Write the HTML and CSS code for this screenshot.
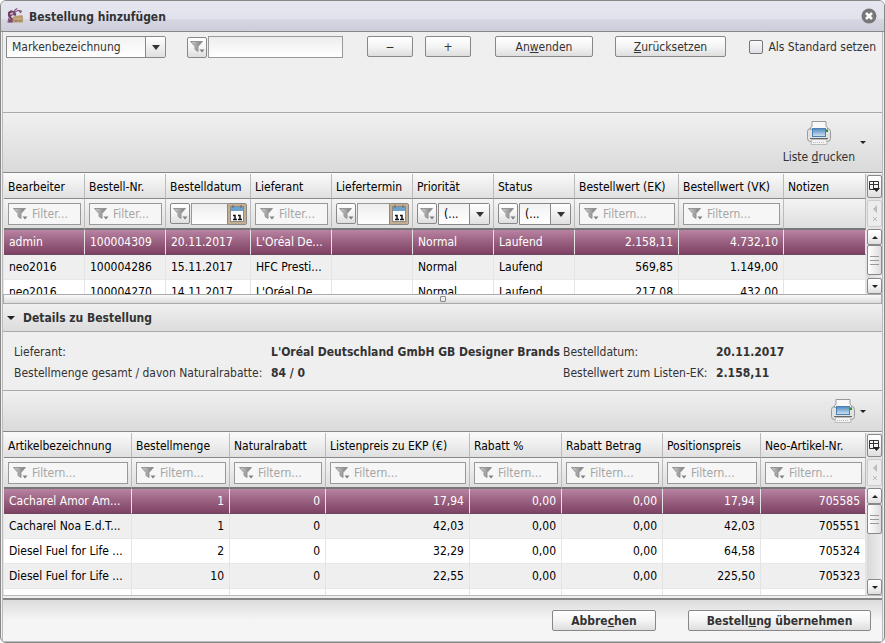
FILE: index.html
```html
<!DOCTYPE html>
<html lang="de">
<head>
    <meta charset="UTF-8">
    <meta name="viewport" content="width=device-width, initial-scale=1.0">
    <title>Bestellung hinzufügen</title>
    <link rel="stylesheet" href="styles.css">
    <script src="script.js" defer></script>
</head>
<body>
    <svg class="symbols" aria-hidden="true">
        <defs>
            <linearGradient id="funnelFill" x1="0" x2="1" y1="0" y2="0">
                <stop offset="0" stop-color="#d2d2d2"/>
                <stop offset="1" stop-color="#777"/>
            </linearGradient>
            <linearGradient id="paperFill" x1="0" x2="0" y1="0" y2="1">
                <stop offset="0" stop-color="#4d87bd"/>
                <stop offset="1" stop-color="#d3e4f3"/>
            </linearGradient>
        </defs>
        <symbol id="funnel" viewBox="0 0 15 14">
            <path d="M0.5 1.5h12l-4.500 5v5l-3-2v-3z" fill="url(#funnelFill)" stroke="#959595"/>
            <path d="M9.500 9.500h5l-2.500 3z" fill="#808080"/>
        </symbol>
        <symbol id="calendar" viewBox="0 0 18 20">
            <rect x="0" y="0" width="18" height="20" fill="#c4ae8e"/>
            <rect x="2.500" y="2.500" width="13" height="15" fill="#fff" stroke="#8a8a8a"/>
            <path d="M3 3h12v4H3z" fill="#6ba3cf"/>
            <path d="M5 1v3M13 1v3" stroke="#666"/>
            <path d="M5 11.500h2V15M5 15.500h4M10 11.500h2V15M10 15.500h4" fill="none" stroke="#111" stroke-width="1.500"/>
        </symbol>
        <symbol id="printer" viewBox="0 0 24 24">
            <rect x="0.500" y="7.500" width="23" height="13" rx="3" fill="#e2e2e2" stroke="#999"/>
            <path d="M3.500 8.500v-2l1.500-1v-5h14v5l1.500 1v2z" fill="#f8f8f8" stroke="#999"/>
            <rect x="5.500" y="7.500" width="13" height="8" fill="url(#paperFill)" stroke="#4a82b6"/>
            <path d="M3 17.500h18" stroke="#666"/>
            <path d="M4.500 18.500h15l0.500 5h-16z" fill="#f2f2f2" stroke="#bbb"/>
            <path d="M6 21.500h12" stroke="#bbb" stroke-dasharray="1 1"/>
            <rect x="19" y="9" width="2" height="2" fill="#1c9a2c"/>
        </symbol>
        <symbol id="columns" viewBox="0 0 11 12">
            <path d="M0.500 0.500h9v8h-9zM0.500 3.500h9M4.500 0.500v8" fill="none" stroke="#333"/>
            <path d="M4 7h7l-3.500 4z" fill="#222"/>
        </symbol>
    </svg>

    <div class="window">
        <header class="titlebar">
            <svg class="app-icon" viewBox="0 0 18 18" aria-hidden="true">
                <path d="M1 5l3-2 4 1 2 3-1 2-3-1-2 2 3 2-1 4H1l2-4-2-3z" fill="#6f4268"/>
                <path d="M7 5l2-3 2-1M8 5l4-2 4 1M12 3l3 3M2 11l-1 5M4 12v4" fill="none" stroke="#84557c" stroke-width="1.200"/>
                <path d="M3 6l3-1 1 2-3 1z" fill="#c5adc3"/>
                <path d="M6 10l3-1 7-1 1 2v6H6z" fill="#b79a70"/>
                <path d="M7 12h9" stroke="#d0b78f"/>
                <path d="M8 14h3M13 14h2" stroke="#8d724f"/>
            </svg>
            <h1>Bestellung hinzufügen</h1>
            <button class="close" aria-label="Schließen">
                <svg viewBox="0 0 16 16"><circle cx="8" cy="8" r="7.500" fill="#777"/><path d="M5 5l6 6M11 5l-6 6" stroke="#fff" stroke-width="2.500"/></svg>
            </button>
        </header>

        <main class="content">
            <form class="search">
                <span class="combo search-field">
                    <select aria-label="Suchfeld"><option>Markenbezeichnung</option></select>
                </span>
                <span class="filter-group search-value">
                    <button type="button" class="btn icon-btn" aria-label="Filterart"><svg><use href="#funnel"/></svg></button>
                    <input type="text" class="text" aria-label="Suchwert">
                </span>
                <button type="button" class="btn small wide-gap">−</button>
                <button type="button" class="btn small">+</button>
                <button type="button" class="btn apply wide-gap">An<u>w</u>enden</button>
                <button type="button" class="btn reset">Zurücksetzen</button>
                <label class="default"><input type="checkbox"> Als Standard setzen</label>
            </form>

            <div class="toolbar">
                <button class="print"><svg><use href="#printer"/></svg><span>Liste <u>d</u>rucken</span></button>
                <button class="menu" aria-label="Druckoptionen"></button>
            </div>

            <section class="grid orders">
                <div class="grid-view">
                    <table>
                        <colgroup>
                            <col class="c-81"><col class="c-81"><col class="c-85"><col class="c-81"><col class="c-81"><col class="c-81"><col class="c-81"><col class="c-104"><col class="c-105"><col>
                        </colgroup>
                        <thead>
                            <tr>
                                <th>Bearbeiter</th><th>Bestell-Nr.</th><th>Bestelldatum</th><th>Lieferant</th><th>Liefertermin</th>
                                <th>Priorität</th><th>Status</th><th>Bestellwert (EK)</th><th>Bestellwert (VK)</th><th>Notizen</th>
                            </tr>
                            <tr class="filters">
                                <td><label class="filter"><svg><use href="#funnel"/></svg><input type="text" placeholder="Filter..." aria-label="Bearbeiter filtern"></label></td>
                                <td><label class="filter"><svg><use href="#funnel"/></svg><input type="text" placeholder="Filter..." aria-label="Bestell-Nr. filtern"></label></td>
                                <td>
                                    <span class="filter-group">
                                        <button class="btn icon-btn" aria-label="Filterart"><svg><use href="#funnel"/></svg></button>
                                        <input type="text" class="text" aria-label="Bestelldatum filtern">
                                        <button class="btn date-btn" aria-label="Kalender"><svg><use href="#calendar"/></svg></button>
                                    </span>
                                </td>
                                <td><label class="filter"><svg><use href="#funnel"/></svg><input type="text" placeholder="Filter..." aria-label="Lieferant filtern"></label></td>
                                <td>
                                    <span class="filter-group">
                                        <button class="btn icon-btn" aria-label="Filterart"><svg><use href="#funnel"/></svg></button>
                                        <input type="text" class="text" aria-label="Liefertermin filtern">
                                        <button class="btn date-btn" aria-label="Kalender"><svg><use href="#calendar"/></svg></button>
                                    </span>
                                </td>
                                <td>
                                    <span class="filter-group">
                                        <button class="btn icon-btn" aria-label="Filterart"><svg><use href="#funnel"/></svg></button>
                                        <span class="combo"><select aria-label="Priorität filtern"><option>(...</option></select></span>
                                    </span>
                                </td>
                                <td>
                                    <span class="filter-group">
                                        <button class="btn icon-btn" aria-label="Filterart"><svg><use href="#funnel"/></svg></button>
                                        <span class="combo"><select aria-label="Status filtern"><option>(...</option></select></span>
                                    </span>
                                </td>
                                <td><label class="filter"><svg><use href="#funnel"/></svg><input type="text" placeholder="Filtern..." aria-label="Bestellwert (EK) filtern"></label></td>
                                <td><label class="filter"><svg><use href="#funnel"/></svg><input type="text" placeholder="Filtern..." aria-label="Bestellwert (VK) filtern"></label></td>
                                <td></td>
                            </tr>
                        </thead>
                        <tbody>
                            <tr class="selected"><td>admin</td><td>100004309</td><td>20.11.2017</td><td>L'Oréal De...</td><td></td><td>Normal</td><td>Laufend</td><td class="num">2.158,11</td><td class="num">4.732,10</td><td></td></tr>
                            <tr><td>neo2016</td><td>100004286</td><td>15.11.2017</td><td>HFC Presti...</td><td></td><td>Normal</td><td>Laufend</td><td class="num">569,85</td><td class="num">1.149,00</td><td></td></tr>
                            <tr><td>neo2016</td><td>100004270</td><td>14.11.2017</td><td>L'Oréal De...</td><td></td><td>Normal</td><td>Laufend</td><td class="num">217,08</td><td class="num">432,00</td><td></td></tr>
                        </tbody>
                    </table>
                </div>
                <div class="grid-side">
                    <button class="btn columns" aria-label="Spalten"><svg><use href="#columns"/></svg></button>
                    <button class="btn clear" aria-label="Filter löschen" disabled><i class="arrow left"></i><svg viewBox="0 0 6 6"><path d="M1 1l4 4M5 1L1 5" stroke="#bbb"/></svg></button>
                    <div class="scrollbar">
                        <button class="btn step" aria-label="Nach oben"><i class="arrow up"></i></button>
                        <div class="track"><div class="thumb"></div></div>
                        <button class="btn step" aria-label="Nach unten"><i class="arrow"></i></button>
                    </div>
                </div>
            </section>

            <div class="splitter"></div>

            <h2 class="details-title"><i class="arrow"></i>Details zu Bestellung</h2>
            <dl class="details">
                <dt>Lieferant:</dt><dd>L'Oréal Deutschland GmbH GB Designer Brands</dd>
                <dt>Bestelldatum:</dt><dd>20.11.2017</dd>
                <dt>Bestellmenge gesamt / davon Naturalrabatte:</dt><dd>84 / 0</dd>
                <dt>Bestellwert zum Listen-EK:</dt><dd>2.158,11</dd>
            </dl>

            <div class="toolbar compact">
                <button class="print" aria-label="Positionen drucken"><svg><use href="#printer"/></svg></button>
                <button class="menu" aria-label="Druckoptionen"></button>
            </div>

            <section class="grid items">
                <div class="grid-view">
                    <table>
                        <colgroup>
                            <col class="c-128"><col class="c-98"><col class="c-96"><col class="c-144"><col class="c-92"><col class="c-101"><col class="c-98"><col>
                        </colgroup>
                        <thead>
                            <tr>
                                <th>Artikelbezeichnung</th><th>Bestellmenge</th><th>Naturalrabatt</th><th>Listenpreis zu EKP (€)</th>
                                <th>Rabatt %</th><th>Rabatt Betrag</th><th>Positionspreis</th><th>Neo-Artikel-Nr.</th>
                            </tr>
                            <tr class="filters">
                                <td><label class="filter"><svg><use href="#funnel"/></svg><input type="text" placeholder="Filtern..." aria-label="Artikelbezeichnung filtern"></label></td>
                                <td><label class="filter"><svg><use href="#funnel"/></svg><input type="text" placeholder="Filtern..." aria-label="Bestellmenge filtern"></label></td>
                                <td><label class="filter"><svg><use href="#funnel"/></svg><input type="text" placeholder="Filtern..." aria-label="Naturalrabatt filtern"></label></td>
                                <td><label class="filter"><svg><use href="#funnel"/></svg><input type="text" placeholder="Filtern..." aria-label="Listenpreis filtern"></label></td>
                                <td><label class="filter"><svg><use href="#funnel"/></svg><input type="text" placeholder="Filtern..." aria-label="Rabatt % filtern"></label></td>
                                <td><label class="filter"><svg><use href="#funnel"/></svg><input type="text" placeholder="Filtern..." aria-label="Rabatt Betrag filtern"></label></td>
                                <td><label class="filter"><svg><use href="#funnel"/></svg><input type="text" placeholder="Filtern..." aria-label="Positionspreis filtern"></label></td>
                                <td><label class="filter"><svg><use href="#funnel"/></svg><input type="text" placeholder="Filtern..." aria-label="Neo-Artikel-Nr. filtern"></label></td>
                            </tr>
                        </thead>
                        <tbody>
                            <tr class="selected"><td>Cacharel Amor Am...</td><td class="num">1</td><td class="num">0</td><td class="num">17,94</td><td class="num">0,00</td><td class="num">0,00</td><td class="num">17,94</td><td class="num">705585</td></tr>
                            <tr><td>Cacharel Noa E.d.T...</td><td class="num">1</td><td class="num">0</td><td class="num">42,03</td><td class="num">0,00</td><td class="num">0,00</td><td class="num">42,03</td><td class="num">705551</td></tr>
                            <tr><td>Diesel Fuel for Life ...</td><td class="num">2</td><td class="num">0</td><td class="num">32,29</td><td class="num">0,00</td><td class="num">0,00</td><td class="num">64,58</td><td class="num">705324</td></tr>
                            <tr><td>Diesel Fuel for Life ...</td><td class="num">10</td><td class="num">0</td><td class="num">22,55</td><td class="num">0,00</td><td class="num">0,00</td><td class="num">225,50</td><td class="num">705323</td></tr>
                            <tr><td></td><td></td><td></td><td></td><td></td><td></td><td></td><td></td></tr>
                        </tbody>
                    </table>
                </div>
                <div class="grid-side">
                    <button class="btn columns" aria-label="Spalten"><svg><use href="#columns"/></svg></button>
                    <button class="btn clear" aria-label="Filter löschen" disabled><i class="arrow left"></i><svg viewBox="0 0 6 6"><path d="M1 1l4 4M5 1L1 5" stroke="#bbb"/></svg></button>
                    <div class="scrollbar">
                        <button class="btn step" aria-label="Nach oben"><i class="arrow up"></i></button>
                        <div class="track"><div class="thumb"></div></div>
                        <button class="btn step" aria-label="Nach unten"><i class="arrow"></i></button>
                    </div>
                </div>
            </section>

            <footer class="actions">
                <button class="btn">Abbre<u>c</u>hen</button>
                <button class="btn submit">Bestell<u>u</u>ng übernehmen</button>
            </footer>
        </main>
    </div>
</body>
</html>
```

FILE: styles.css
```css
* {
    box-sizing: border-box;
}
body {
    margin: 0;
    background: #fff;
    color: #333;
    font: 12px/16px "DejaVu Sans Condensed", Tahoma, "DejaVu Sans", sans-serif;
}
button, input, select {
    font: inherit;
    color: inherit;
    margin: 0;
}
.symbols {
    position: absolute;
    width: 0;
    height: 0;
}
.window {
    display: flex;
    flex-direction: column;
    height: 100vh;
    border: 1px solid #888;
    border-radius: 6px;
    background: #efefef;
    overflow: hidden;
}

/* title bar */
.titlebar {
    display: flex;
    align-items: center;
    flex: none;
    height: 31px;
    padding: 0 7px 0 6px;
    border-bottom: 1px solid #888;
    background: linear-gradient(#e6e6f0, #e2e2ec 60%, #d6d6e2 62%, #cdcdda);
}
.titlebar h1 {
    flex: 1;
    margin: 0 0 0 5px;
    padding-top: 1px;
    font-size: 12px;
}
.app-icon {
    width: 17px;
    height: 18px;
}
.close {
    width: 16px;
    height: 16px;
    padding: 0;
    border: 0;
    background: none;
}
.close svg {
    display: block;
}
.content {
    display: flex;
    flex: 1;
    flex-direction: column;
    min-height: 0;
    margin: 0 1px;
    border: 1px solid #bbb;
    border-top: 0;
}

/* buttons and fields */
.btn {
    height: 21px;
    padding: 0;
    border: 1px solid #888;
    border-radius: 2px;
    background: linear-gradient(#fff, #f4f4f4 50%, #dedede);
}
.icon-btn {
    display: flex;
    align-items: center;
    justify-content: center;
    flex: none;
    width: 20px;
}
.icon-btn svg, .filter svg {
    flex: none;
    width: 15px;
    height: 14px;
}
.text {
    flex: 1;
    width: 0;
    min-width: 0;
    height: 22px;
    padding: 0 4px;
    border: 1px solid #999;
    background: linear-gradient(#ededed, #fff);
}
.filter-group {
    display: flex;
    align-items: center;
    gap: 1px;
}
.combo {
    position: relative;
    display: flex;
    flex: 1;
    min-width: 0;
}
.combo select {
    appearance: none;
    width: 100%;
    height: 22px;
    padding: 0 20px 0 5px;
    border: 1px solid #888;
    border-radius: 0 2px 2px 0;
    background: linear-gradient(#f2f2f2, #fff);
}
.combo::before {
    content: "";
    position: absolute;
    top: 1px;
    right: 1px;
    bottom: 1px;
    width: 19px;
    border-left: 1px solid #888;
    background: linear-gradient(#fff, #e0e0e0);
    pointer-events: none;
}
.combo::after {
    content: "";
    position: absolute;
    top: 9px;
    right: 6px;
    border: 4px solid transparent;
    border-top: 5px solid #333;
    border-bottom: 0;
    pointer-events: none;
}
.arrow {
    width: 0;
    height: 0;
    border: 3px solid transparent;
    border-top-color: #222;
    border-bottom: 0;
}
.arrow.up {
    border-top: 0;
    border-bottom: 3px solid #222;
}
.arrow.left {
    border: 4px solid transparent;
    border-right-color: #bbb;
    border-left: 0;
}

/* search row */
.search {
    display: flex;
    align-items: flex-start;
    gap: 12px;
    height: 80px;
    padding: 4px 6px 0 3px;
}
.search-field {
    flex: none;
    width: 160px;
}
.search-value {
    width: 156px;
    margin-left: 9px;
}
.btn.small {
    width: 46px;
}
.btn.wide-gap {
    margin-left: 12px;
}
.apply {
    width: 98px;
}
.reset {
    width: 111px;
    margin-left: 10px;
}
.reset::first-letter {
    text-decoration: underline;
}
.default {
    display: flex;
    align-items: center;
    gap: 5px;
    height: 22px;
    margin-left: auto;
    white-space: nowrap;
}
.default input {
    appearance: none;
    width: 14px;
    height: 14px;
    border: 1px solid #777;
    border-radius: 2px;
    background: linear-gradient(#fafafa, #dcdfe6);
}

/* print toolbars */
.toolbar {
    display: flex;
    align-items: center;
    justify-content: flex-end;
    flex: none;
    height: 61px;
    padding-right: 16px;
    border-top: 1px solid #aaa;
    border-bottom: 1px solid #888;
    background: linear-gradient(#f0f0f0, #dadada);
}
.toolbar.compact {
    height: 42px;
}
.print {
    display: flex;
    flex-direction: column;
    align-items: center;
    gap: 4px;
    padding: 0;
    border: 0;
    background: none;
}
.print svg {
    width: 24px;
    height: 24px;
}
.menu {
    width: 6px;
    height: 3px;
    margin-left: 5px;
    padding: 0;
    border: 3px solid transparent;
    border-top-color: #222;
    border-bottom: 0;
    background: none;
}

/* grids */
.grid {
    display: flex;
    overflow: hidden;
    border-top: 1px solid #f8f8f8;
    background: #e4e4e4;
}
.grid.orders {
    flex: none;
    height: 121px;
}
.grid.items {
    flex: 1;
    min-height: 0;
    border-bottom: 1px solid #bbb;
}
.grid-view {
    flex: 1;
    min-width: 0;
    margin-left: 1px;
    overflow: hidden;
    background: #fff;
}
table {
    width: 100%;
    table-layout: fixed;
    border-collapse: separate;
    border-spacing: 0;
    color: #000;
}
.c-81 { width: 81px; }
.c-85 { width: 85px; }
.c-92 { width: 92px; }
.c-96 { width: 96px; }
.c-98 { width: 98px; }
.c-101 { width: 101px; }
.c-104 { width: 104px; }
.c-105 { width: 105px; }
.c-128 { width: 128px; }
.c-144 { width: 144px; }
th, td {
    overflow: hidden;
    white-space: nowrap;
    border-right: 1px solid #e4e4e4;
}
th {
    height: 25px;
    padding: 2px 0 0 4px;
    border-right-color: #bbb;
    border-bottom: 1px solid #888;
    background: linear-gradient(#fafafa, #e0e0e0);
    font-weight: normal;
    text-align: left;
}
.filters td {
    height: 31px;
    padding: 0 3px 0 4px;
    border-right-color: #bbb;
    border-bottom: 2px solid #777;
    background: linear-gradient(#f4f4f4, #dedede);
}
.filter {
    display: flex;
    align-items: center;
    gap: 4px;
    height: 22px;
    padding-left: 4px;
    border: 1px solid #999;
    background: #f6f6f6;
}
.filter input {
    flex: 1;
    width: 0;
    min-width: 0;
    padding: 0;
    border: 0;
    background: none;
}
.filter input::placeholder {
    color: #a5a5a5;
    opacity: 1;
}
.date-btn {
    flex: none;
    width: 20px;
    height: 22px;
    margin-left: -2px;
}
.date-btn svg {
    display: block;
    width: 18px;
    height: 20px;
}
tbody td {
    height: 25px;
    padding: 0 5px;
    border-bottom: 1px solid #e8e8e8;
}
tbody tr:nth-child(even) td {
    background: #efefef;
}
tbody .selected td {
    border-bottom-color: #6b4a60;
    background: linear-gradient(#b983a3, #99607f 50%, #7f4265);
    color: #fff;
}
.num {
    text-align: right;
}
.grid-side {
    display: flex;
    flex: none;
    flex-direction: column;
    width: 16px;
    padding-left: 1px;
}
.columns {
    height: 23px;
    margin-top: 1px;
}
.columns svg {
    display: block;
    width: 11px;
    height: 12px;
    margin: auto;
}
.clear {
    display: flex;
    flex-direction: column;
    align-items: center;
    justify-content: center;
    gap: 3px;
    height: 27px;
    margin: 2px 0;
    border-color: #ccc;
    background: #ececec;
}
.clear svg {
    width: 6px;
    height: 6px;
}
.scrollbar {
    display: flex;
    flex: 1;
    flex-direction: column;
    min-height: 0;
}
.step {
    display: flex;
    align-items: center;
    justify-content: center;
    flex: none;
    height: 16px;
}
.track {
    flex: 1;
    background: linear-gradient(90deg, #d8d8d8, #eee);
}
.thumb {
    height: 30px;
    border: 1px solid #888;
    border-radius: 2px;
    background:
        repeating-linear-gradient(#999 0 1px, transparent 1px 4px) 50% 50% / 9px 9px no-repeat,
        linear-gradient(90deg, #fff, #ddd);
}

/* splitter and order details */
.splitter {
    display: flex;
    align-items: center;
    justify-content: center;
    flex: none;
    height: 10px;
    border: 1px solid #aaa;
    background: linear-gradient(#fafafa, #dcdcdc);
}
.splitter::after {
    content: "";
    width: 4px;
    height: 4px;
    border: 1px solid #888;
    border-radius: 1px;
}
.details-title {
    display: flex;
    align-items: center;
    gap: 8px;
    flex: none;
    height: 28px;
    margin: 0;
    padding-left: 4px;
    border-bottom: 1px solid #aaa;
    background: linear-gradient(#f0f0f0, #dcdcdc);
    font-size: 12px;
}
.details-title .arrow {
    border-width: 4px 4px 0;
}
.details {
    display: grid;
    grid-template-columns: 249px 284px 145px 1fr;
    align-content: start;
    column-gap: 8px;
    row-gap: 5px;
    flex: none;
    height: 58px;
    margin: 0;
    padding: 12px 0 0 11px;
    white-space: nowrap;
}
.details dd {
    margin: 0;
    font-weight: bold;
}

/* dialog buttons */
.actions {
    display: flex;
    align-items: center;
    justify-content: flex-end;
    gap: 32px;
    flex: none;
    height: 43px;
    margin-top: 2px;
    border-top: 2px solid #888;
    padding-right: 11px;
    background: linear-gradient(#dcdcdc, #f5f5f5 50%);
}
.actions .btn {
    width: 104px;
    font-weight: bold;
}
.actions .submit {
    width: 183px;
}
```

FILE: script.js
```js
// Filter the rows of a grid by the text typed above each column
document.querySelectorAll(".grid").forEach(function (grid) {
    var inputs = grid.querySelectorAll(".filters input");
    inputs.forEach(function (input) {
        input.addEventListener("input", function () {
            grid.querySelectorAll("tbody tr").forEach(function (row) {
                var visible = Array.from(inputs).every(function (field) {
                    var cell = row.cells[field.closest("td").cellIndex];
                    return cell.innerText.toLowerCase().includes(field.value.toLowerCase());
                });
                row.style.display = visible ? "" : "none";
            });
        });
    });
});
```
